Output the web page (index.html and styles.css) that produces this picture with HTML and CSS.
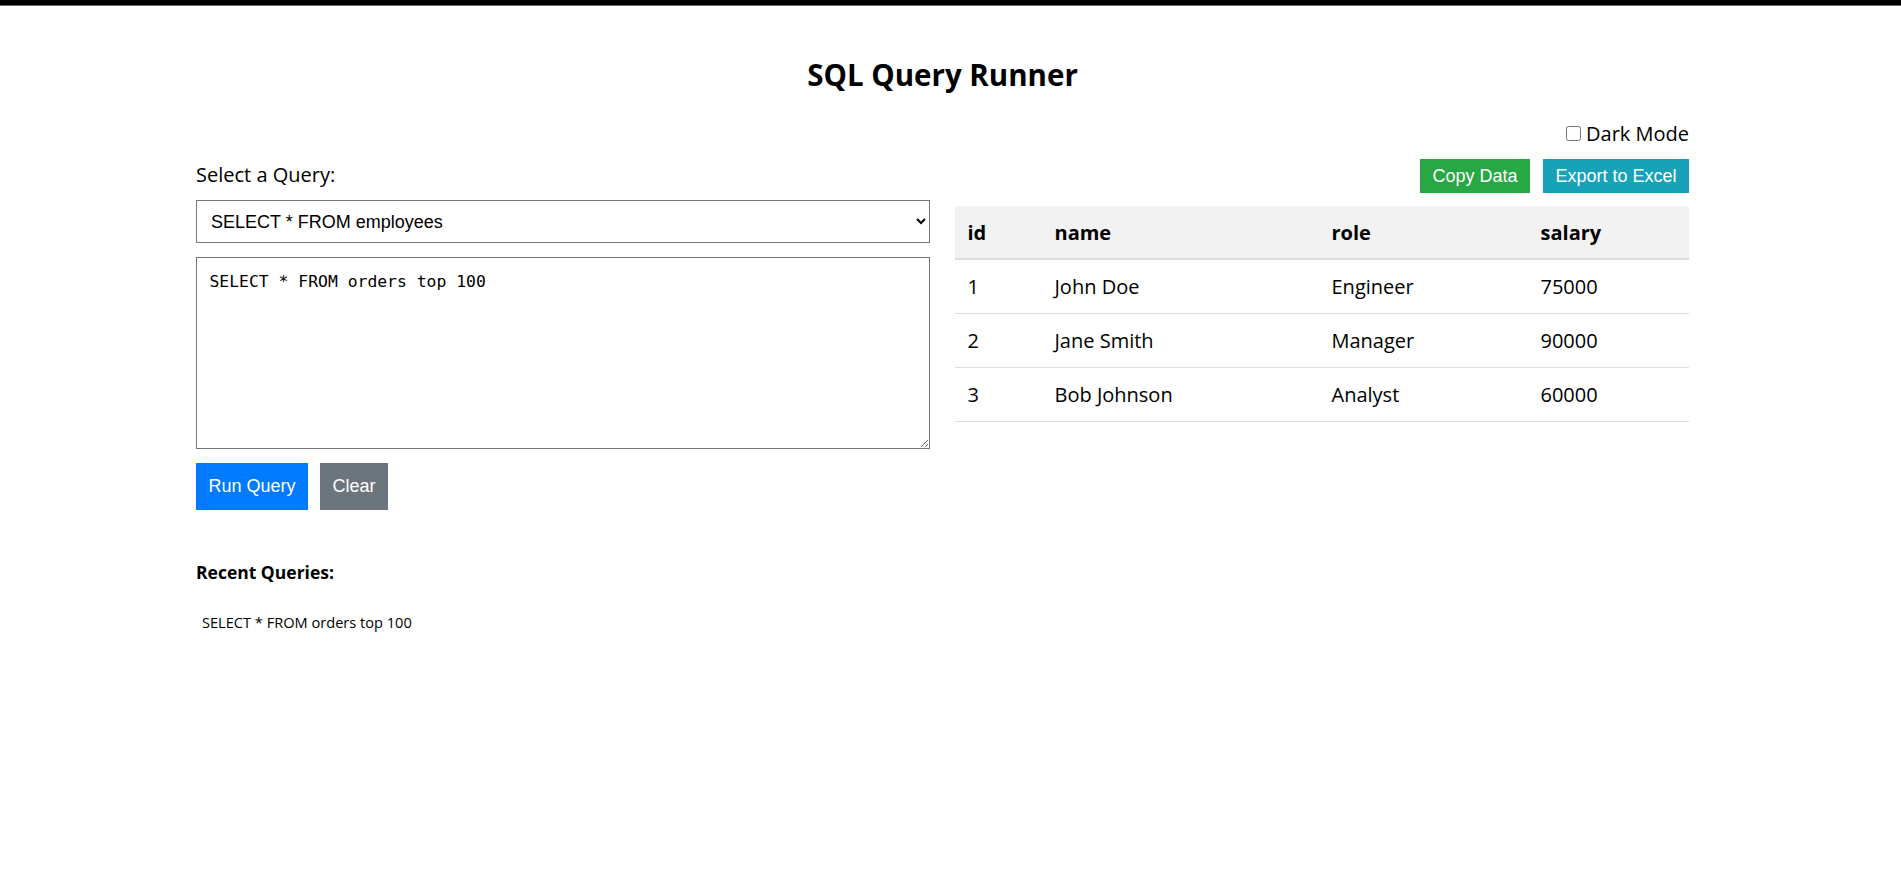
FILE: index.html
```html
<!DOCTYPE html>
<html lang="en">
<head>
<meta charset="utf-8">
<title>SQL Query Runner</title>
<link rel="stylesheet" href="styles.css">
</head>
<body>
<div class="topbar"></div>
<div class="page">
  <h1 class="title">SQL Query Runner</h1>
  <div class="toggle-row">
    <label class="toggle"><input type="checkbox" class="toggle-box"><span>Dark Mode</span></label>
  </div>
  <div class="main">
    <div class="left">
      <div class="label">Select a Query:</div>
      <select class="query-select">
        <option>SELECT * FROM employees</option>
        <option>SELECT * FROM orders top 100</option>
      </select>
      <textarea class="editor">SELECT * FROM orders top 100</textarea>
      <div class="btn-row">
        <button class="btn btn-lg btn-blue">Run Query</button>
        <button class="btn btn-lg btn-gray">Clear</button>
      </div>
    </div>
    <div class="right">
      <div class="actions">
        <button class="btn btn-sm btn-green">Copy Data</button>
        <button class="btn btn-sm btn-teal">Export to Excel</button>
      </div>
      <table class="results">
        <colgroup>
          <col class="c-id"><col class="c-name"><col class="c-role"><col class="c-salary">
        </colgroup>
        <thead>
          <tr><th>id</th><th>name</th><th>role</th><th>salary</th></tr>
        </thead>
        <tbody>
          <tr><td>1</td><td>John Doe</td><td>Engineer</td><td>75000</td></tr>
          <tr><td>2</td><td>Jane Smith</td><td>Manager</td><td>90000</td></tr>
          <tr><td>3</td><td>Bob Johnson</td><td>Analyst</td><td>60000</td></tr>
        </tbody>
      </table>
    </div>
  </div>
  <div class="recent">
    <div class="recent-title">Recent Queries:</div>
    <ul class="recent-list">
      <li>SELECT * FROM orders top 100</li>
    </ul>
  </div>
</div>
</body>
</html>
```
FILE: styles.css
```css
* { box-sizing: border-box; }

html, body {
  margin: 0;
  padding: 0;
  background: #fff;
  color: #000;
  font-family: "Open Sans", "Noto Sans", sans-serif;
}

.topbar {
  height: 6px;
  background: #000;
  border-bottom: 1px solid #6a6a6a;
}

.page {
  width: 1493px;
  margin: 0 0 0 196px;
}

.title {
  margin: 49px 0 0;
  font-size: 29.5px;
  line-height: 40px;
  font-weight: 700;
  text-align: center;
}

.toggle-row {
  margin-top: 25px;
  display: flex;
  justify-content: flex-end;
  height: 27px;
}

.toggle {
  display: flex;
  align-items: center;
  font-size: 20px;
  line-height: 27px;
}

.toggle-box {
  width: 15px;
  height: 15px;
  margin: 0 5px 0 0;
}

.main {
  margin-top: 12px;
  display: grid;
  grid-template-columns: 734px 734px;
  column-gap: 25px;
  align-items: start;
}

.left {
  display: flex;
  flex-direction: column;
}

.label {
  font-size: 20px;
  line-height: 32px;
}

.query-select {
  margin-top: 9px;
  height: 43px;
  width: 100%;
  padding: 0 10px;
  font-family: "Liberation Sans", Arial, sans-serif;
  font-size: 18px;
  color: #000;
  background-color: #fff;
  border: 1px solid #767676;
  border-radius: 0;
}

.editor {
  margin-top: 14px;
  width: 100%;
  height: 192px;
  padding: 14px 12.5px 10px;
  font-family: "DejaVu Sans Mono", "Liberation Mono", monospace;
  font-size: 16.4px;
  line-height: 20px;
  color: #000;
  border: 1px solid #767676;
  border-radius: 0;
  resize: vertical;
}

.btn-row {
  margin-top: 14px;
  display: flex;
  gap: 12px;
}

.btn {
  border: none;
  border-radius: 0;
  color: #fff;
  font-family: "Liberation Sans", Arial, sans-serif;
  font-size: 18px;
  line-height: 21px;
  cursor: pointer;
}

.btn-lg {
  height: 47px;
  padding: 0 12.5px;
}

.btn-sm {
  height: 34px;
  padding: 0 12.5px;
}

.btn-blue { background: #007bff; }
.btn-gray { background: #6c757d; }
.btn-green { background: #28a745; }
.btn-teal { background: #17a2b8; }

.actions {
  display: flex;
  justify-content: flex-end;
  gap: 13px;
}

.results {
  margin-top: 13px;
  width: 100%;
  border-collapse: separate;
  border-spacing: 0;
  table-layout: fixed;
  font-size: 20px;
}

.c-id { width: 87px; }
.c-name { width: 277px; }
.c-role { width: 209px; }
.c-salary { width: 161px; }

.results th {
  background: #f2f2f2;
  text-align: left;
  font-weight: 700;
  padding: 12.5px 12.5px;
  line-height: 27px;
  border-bottom: 2px solid #dcdcdc;
}

.results td {
  padding: 13px 12.5px 12px;
  line-height: 28px;
  border-bottom: 1px solid #dddddd;
}

.recent {
  margin-top: 50px;
}

.recent-title {
  font-size: 17.5px;
  line-height: 24px;
  font-weight: 700;
}

.recent-list {
  list-style: none;
  margin: 28px 0 0;
  padding: 0 0 0 6px;
  font-size: 14.6px;
  line-height: 20px;
}
```
